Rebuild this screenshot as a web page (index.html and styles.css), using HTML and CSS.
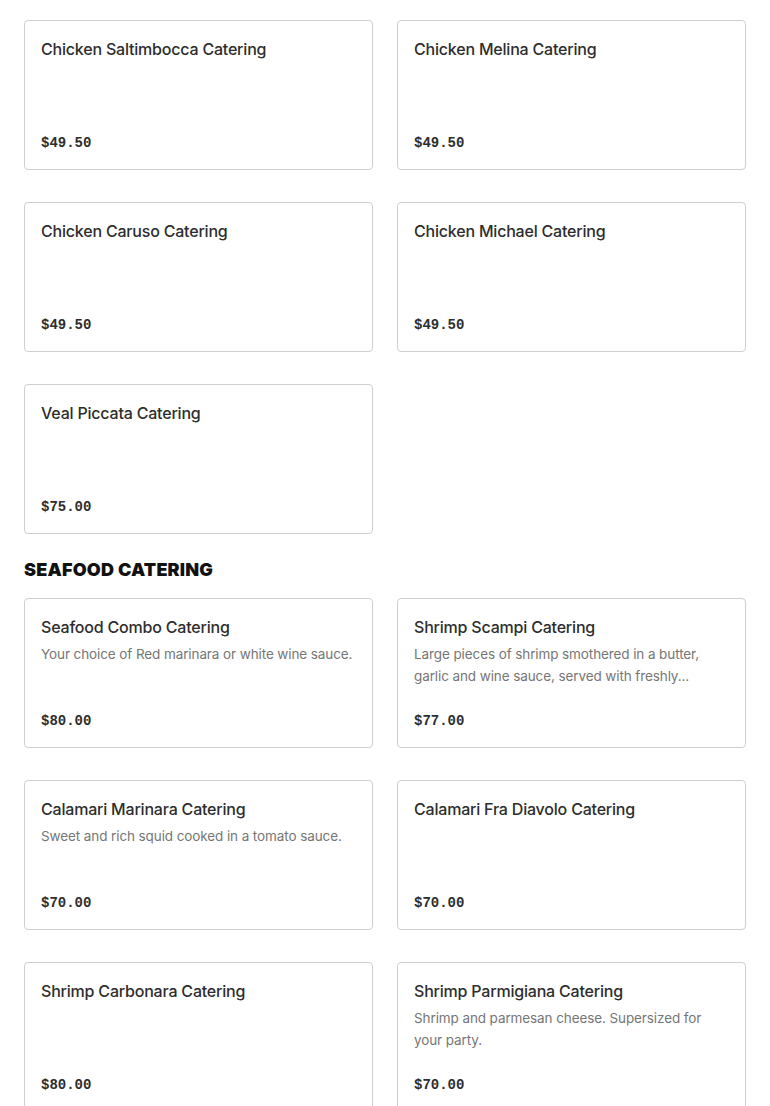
FILE: index.html
```html
<!DOCTYPE html>
<html lang="en">
<head>
    <meta charset="UTF-8">
    <meta name="viewport" content="width=device-width, initial-scale=1.0">
    <title>Catering Menu</title>
    <link rel="stylesheet" href="styles.css">
</head>
<body>
    <div class="menu">
        <section class="category">
            <div class="items">
                <div class="item">
                    <h3>Chicken Saltimbocca Catering</h3>
                    <div class="price">$49.50</div>
                </div>
                <div class="item">
                    <h3>Chicken Melina Catering</h3>
                    <div class="price">$49.50</div>
                </div>
                <div class="item">
                    <h3>Chicken Caruso Catering</h3>
                    <div class="price">$49.50</div>
                </div>
                <div class="item">
                    <h3>Chicken Michael Catering</h3>
                    <div class="price">$49.50</div>
                </div>
                <div class="item">
                    <h3>Veal Piccata Catering</h3>
                    <div class="price">$75.00</div>
                </div>
            </div>
        </section>

        <section class="category">
            <h2>SEAFOOD CATERING</h2>
            <div class="items">
                <div class="item">
                    <h3>Seafood Combo Catering</h3>
                    <p>Your choice of Red marinara or white wine sauce.</p>
                    <div class="price">$80.00</div>
                </div>
                <div class="item">
                    <h3>Shrimp Scampi Catering</h3>
                    <p>Large pieces of shrimp smothered in a butter, garlic and wine sauce, served with freshly...</p>
                    <div class="price">$77.00</div>
                </div>
                <div class="item">
                    <h3>Calamari Marinara Catering</h3>
                    <p>Sweet and rich squid cooked in a tomato sauce.</p>
                    <div class="price">$70.00</div>
                </div>
                <div class="item">
                    <h3>Calamari Fra Diavolo Catering</h3>
                    <div class="price">$70.00</div>
                </div>
                <div class="item">
                    <h3>Shrimp Carbonara Catering</h3>
                    <div class="price">$80.00</div>
                </div>
                <div class="item">
                    <h3>Shrimp Parmigiana Catering</h3>
                    <p>Shrimp and parmesan cheese. Supersized for your party.</p>
                    <div class="price">$70.00</div>
                </div>
            </div>
        </section>
    </div>
</body>
</html>
```

FILE: styles.css
```css
* {
    margin: 0;
    padding: 0;
    box-sizing: border-box;
}

body {
    background: #fff;
    font-family: Inter, "Noto Sans", sans-serif;
    color: #2d2d2d;
    overflow: hidden;
}

.menu {
    padding: 20px 24px 0;
}

.category + .category {
    margin-top: 24px;
}

.category h2 {
    font-size: 18px;
    font-weight: 900;
    line-height: 24px;
    color: #111;
    letter-spacing: 0.2px;
    margin-bottom: 16px;
}

.items {
    display: grid;
    grid-template-columns: 1fr 1fr;
    column-gap: 24px;
    row-gap: 32px;
}

.item {
    display: flex;
    flex-direction: column;
    height: 150px;
    padding: 16px;
    border: 1px solid #cfcfcf;
    border-radius: 4px;
}

.item h3 {
    font-size: 16px;
    font-weight: 500;
    line-height: 24px;
    color: #2d2d2d;
    letter-spacing: -0.2px;
}

.item p {
    margin-top: 4px;
    font-size: 13.5px;
    line-height: 22px;
    letter-spacing: -0.1px;
    color: #767676;
}

.price {
    margin-top: auto;
    font-family: "Liberation Mono", monospace;
    font-size: 14px;
    font-weight: 700;
    line-height: 20px;
    color: #2d2d2d;
}
```
